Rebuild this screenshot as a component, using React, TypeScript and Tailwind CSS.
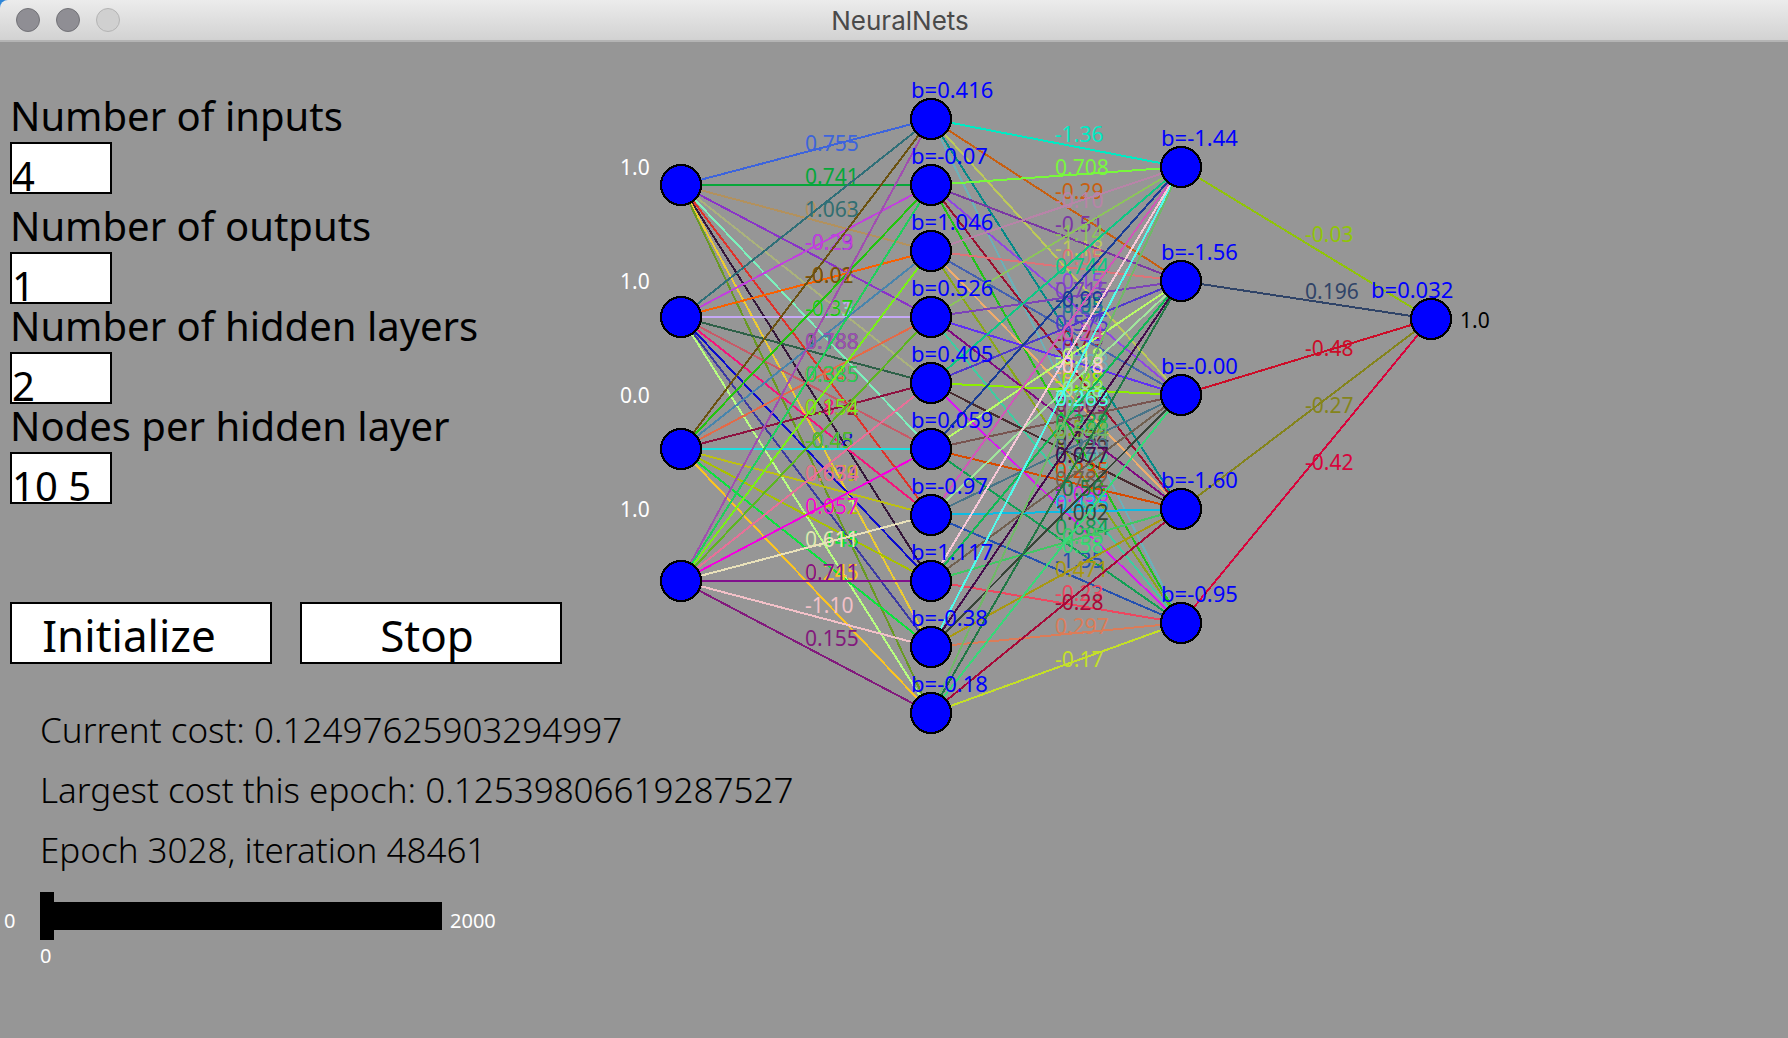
import { Fragment, useState } from "react";

type Edge = [color: string, weight: string];

const LAYER_X = [681, 931, 1181, 1431];
const LAYER_Y = [
  [185, 317, 449, 581],
  [119, 185, 251, 317, 383, 449, 515, 581, 647, 713],
  [167, 281, 395, 509, 623],
  [319],
];

// EDGES[layer][source][target]
const EDGES: Edge[][][] = [
  [
    [["#3d64dc", "0.755"], ["#06a73a", "0.741"], ["#b2915e", "0.068"], ["#8a34c8", "-0.23"], ["#aab27c", "-0.04"], ["#7cf0bc", "-0.33"], ["#e0322a", "0.188"], ["#35173a", "0.045"], ["#eccb33", "0.152"], ["#689a22", "-0.45"]],
    [["#2f6f78", "1.063"], ["#c043dc", "-0.29"], ["#f96000", "-0.01"], ["#c4a8f4", "-0.31"], ["#2e6048", "1.188"], ["#c85a68", "0.085"], ["#f4157c", "0.854"], ["#0b0bcf", "-0.48"], ["#3c3aa4", "0.011"], ["#b8ff80", "0.851"]],
    [["#6b5211", "-0.02"], ["#22c40e", "-0.37"], ["#4884ac", "0.188"], ["#e46a48", "0.045"], ["#8e1240", "0.152"], ["#1cdfe0", "-0.45"], ["#bcc015", "0.079"], ["#a8c200", "0.852"], ["#0ae43c", "0.145"], ["#fac322", "0.245"]],
    [["#a04eb0", "0.788"], ["#1fd05a", "0.385"], ["#78f018", "0.154"], ["#5cb620", "-0.45"], ["#e87098", "0.634"], ["#f400e0", "0.057"], ["#e9e1ba", "0.611"], ["#80108c", "0.711"], ["#f2c1c8", "-1.10"], ["#821a7c", "0.155"]],
  ],
  [
    [["#00ebc4", "-1.36"], ["#c85f10", "-0.29"], ["#bcc85a", "-1.18"], ["#058a88", "-0.05"], ["#6cb0b8", "0.388"]],
    [["#78f83c", "0.708"], ["#7b38a4", "-0.51"], ["#9048e0", "-0.15"], ["#9a1030", "-0.73"], ["#22c418", "0.268"]],
    [["#b884a8", "-0.10"], ["#dc7478", "-0.05"], ["#4460b0", "-0.57"], ["#eeac6c", "-0.18"], ["#88a818", "0.544"]],
    [["#8cc45c", "-1.14"], ["#7c44b8", "0.715"], ["#6030f4", "-0.77"], ["#800a80", "0.305"], ["#40cca0", "0.188"]],
    [["#0cc884", "0.744"], ["#5038cc", "0.575"], ["#8cf000", "-0.88"], ["#482c30", "0.134"], ["#d81cf0", "0.056"]],
    [["#183c98", "-0.99"], ["#b8fc68", "-0.18"], ["#785450", "0.153"], ["#d84a00", "0.235"], ["#10a054", "0.684"]],
    [["#d058b8", "-0.24"], ["#a0e49c", "-0.88"], ["#487488", "0.229"], ["#0cbce4", "0.435"], ["#2450b0", "-1.35"]],
    [["#f8c8d8", "-0.18"], ["#10b854", "0.288"], ["#706050", "0.782"], ["#40c864", "-0.35"], ["#ec4860", "-0.23"]],
    [["#50fcec", "0.268"], ["#440c4c", "0.077"], ["#384438", "1.002"], ["#a89810", "0.471"], ["#dc7c58", "0.297"]],
    [["#70b868", "0.544"], ["#207844", "-0.56"], ["#38d878", "-0.58"], ["#a80838", "-0.28"], ["#c4e028", "-0.17"]],
  ],
  [[["#90c408", "-0.03"]], [["#304468", "0.196"]], [["#cc0c28", "-0.48"]], [["#84841c", "-0.27"]], [["#d8043c", "-0.42"]]],
];

const BIAS_X = [0, 911, 1161, 1371];
const BIASES = [
  [],
  ["0.416", "-0.07", "1.046", "0.526", "0.405", "0.059", "-0.97", "1.117", "-0.38", "-0.18"],
  ["-1.44", "-1.56", "-0.00", "-1.60", "-0.95"],
  ["0.032"],
];

const INPUT_VALUES = ["1.0", "1.0", "0.0", "1.0"];

function Network() {
  return (
    <svg
      viewBox="600 42 900 720"
      preserveAspectRatio="xMinYMin meet"
      className="h-[720px] min-w-0 flex-1 font-['Noto_Sans'] text-[21px]"
      role="img"
      aria-label="Neural network"
    >
      {INPUT_VALUES.map((value, i) => (
        <text key={i} x={620} y={175 + i * 114} fill="#fff">{value}</text>
      ))}
      {EDGES.map((sources, layer) =>
        sources.map((targets, s) =>
          targets.map(([color, weight], t) => {
            const x = LAYER_X[layer];
            const y1 = LAYER_Y[layer][s];
            const y2 = LAYER_Y[layer + 1][t];
            return (
              <Fragment key={`${layer}-${s}-${t}`}>
                <line x1={x} y1={y1} x2={x + 250} y2={y2} stroke={color} strokeWidth={2} shapeRendering="crispEdges" />
                <text x={x + 124} y={(y1 + y2) / 2 - 1} fill={color}>{weight}</text>
              </Fragment>
            );
          }),
        ),
      )}
      {LAYER_X.map((x, layer) =>
        LAYER_Y[layer].map((y, i) => (
          <Fragment key={`${x}-${y}`}>
            <circle cx={x} cy={y} r={20} fill="#0000ff" stroke="#000" strokeWidth={2} shapeRendering="crispEdges" />
            {BIASES[layer][i] && (
              <text x={BIAS_X[layer]} y={y - 21} fill="#0000ff" className="text-[22px]">b={BIASES[layer][i]}</text>
            )}
          </Fragment>
        )),
      )}
      <text x={1460} y={328} fill="#000">1.0</text>
    </svg>
  );
}

function Field({ id, label, initial }: { id: string; label: string; initial: string }) {
  const [value, setValue] = useState(initial);
  return (
    <div className="flex flex-col items-start">
      <label htmlFor={id} className="h-12 text-[40px] leading-[44px] whitespace-nowrap">{label}</label>
      <input
        id={id}
        value={value}
        onChange={(e) => setValue(e.target.value)}
        className="h-[52px] w-[102px] border-2 border-black bg-white pt-3.5 text-[40px] leading-9 outline-none"
      />
    </div>
  );
}

export default function App() {
  const [speed, setSpeed] = useState(0);
  const button = "h-[62px] w-[262px] border-2 border-black bg-white pt-1 text-[44px] leading-none";
  return (
    <div className="flex min-h-screen flex-col bg-[#969696] font-['Noto_Sans',sans-serif] text-black">
      <div className="bg-[#2f86d8]">
        <header className="grid h-[42px] grid-cols-[1fr_auto_1fr] items-center rounded-tl-lg border-b-2 border-[#b4b4b4] bg-linear-to-b from-[#ececec] to-[#d2d2d2] px-4">
          <div className="flex gap-4">
            <button aria-label="Close" className="size-6 rounded-full border border-[#727277] bg-[#8f8e94]" />
            <button aria-label="Minimize" className="size-6 rounded-full border border-[#727277] bg-[#8f8e94]" />
            <button aria-label="Zoom" className="size-6 rounded-full border border-[#b4b4b4] bg-[#d0d0d0]" />
          </div>
          <h1 className="pt-0.5 pl-3 font-[Inter] text-[26px] leading-none text-[#4a4a4a]">NeuralNets</h1>
        </header>
      </div>
      <main className="flex flex-1 items-start">
        <section className="w-[600px] shrink-0 pt-[52px] pl-2.5">
          <div className="flex flex-col">
            <div className="mb-2.5">
              <Field id="inputs" label="Number of inputs" initial="4" />
            </div>
            <Field id="outputs" label="Number of outputs" initial="1" />
            <Field id="layers" label="Number of hidden layers" initial="2" />
            <Field id="nodes" label="Nodes per hidden layer" initial="10 5" />
          </div>
          <div className="mt-[98px] flex gap-7">
            <button className={`${button} pr-6`}>Initialize</button>
            <button className={`${button} pr-2`}>Stop</button>
          </div>
          <div className="mt-9 pl-[30px] text-[35px] leading-[60px] font-light whitespace-nowrap">
            <p>Current cost: 0.12497625903294997</p>
            <p>Largest cost this epoch: 0.12539806619287527</p>
            <p>Epoch 3028, iteration 48461</p>
          </div>
          <div className="-ml-2 mt-3 grid grid-cols-[38px_402px_auto] items-center text-[20px] leading-6 text-white">
            <span className="pt-2.5 pl-0.5">0</span>
            <input
              type="range"
              aria-label="Speed"
              min={0}
              max={2000}
              value={speed}
              onChange={(e) => setSpeed(Number(e.target.value))}
              className="h-12 w-full appearance-none bg-transparent [&::-webkit-slider-runnable-track]:h-7 [&::-webkit-slider-runnable-track]:bg-black [&::-webkit-slider-thumb]:-mt-2.5 [&::-webkit-slider-thumb]:h-12 [&::-webkit-slider-thumb]:w-3.5 [&::-webkit-slider-thumb]:appearance-none [&::-webkit-slider-thumb]:bg-black"
            />
            <span className="pt-2.5 pl-2">2000</span>
            <output className="col-start-2 pt-1">{speed}</output>
          </div>
        </section>
        <Network />
      </main>
    </div>
  );
}
